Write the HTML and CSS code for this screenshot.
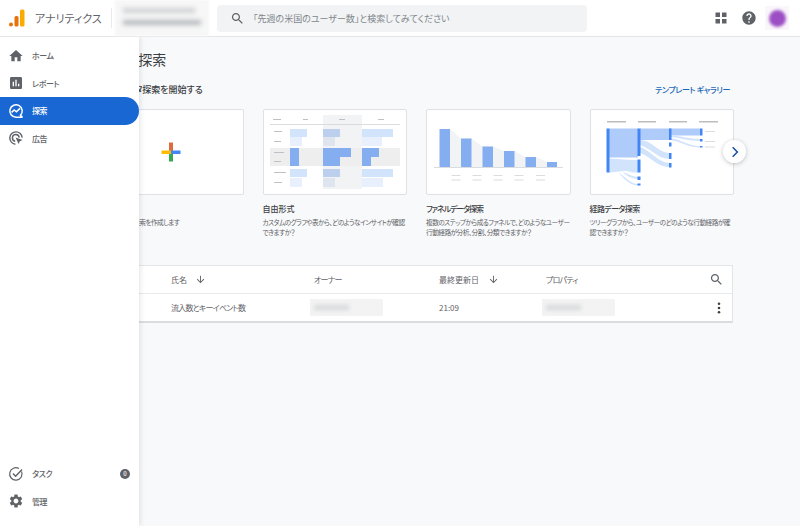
FILE: index.html
```html
<!DOCTYPE html>
<html lang="ja">
  <head>
    <meta charset="utf-8">
    <title>アナリティクス</title>
    <link rel="stylesheet" href="styles.css">
  </head>
  <body>
    <header class="topbar">
      <div class="brand">
        <svg class="logo" viewBox="0 0 16 18" width="16" height="18">
          <circle cx="2" cy="15.5" r="2" fill="#e8710a"/>
          <rect x="5.5" y="7" width="4" height="10.5" rx="1.5" fill="#e8710a"/>
          <rect x="11" y="0.5" width="4.5" height="17" rx="1.5" fill="#f9ab00"/>
        </svg>
        <span class="brand-name">アナリティクス</span>
      </div>
      <div class="divider"></div>
      <div class="account">
        <div class="account-line short"></div>
        <div class="account-line"></div>
      </div>
      <div class="search">
        <svg class="icon" viewBox="0 0 24 24" width="15" height="15"><path d="M15.5 14h-.79l-.28-.27C15.41 12.59 16 11.11 16 9.5 16 5.91 13.09 3 9.5 3S3 5.91 3 9.5 5.91 16 9.5 16c1.61 0 3.09-.59 4.23-1.57l.27.28v.79l5 4.99L20.49 19l-4.99-5zm-6 0C7.01 14 5 11.99 5 9.5S7.01 5 9.5 5 14 7.01 14 9.5 11.99 14 9.5 14z"/></svg>
        <span>「先週の米国のユーザー数」と検索してみてください</span>
      </div>
      <div class="top-actions">
        <svg class="icon" viewBox="0 0 14 14" width="14" height="14">
          <rect x="1.5" y="1.5" width="4.5" height="4.5"/><rect x="8" y="1.5" width="4.5" height="4.5"/>
          <rect x="1.5" y="8" width="4.5" height="4.5"/><rect x="8" y="8" width="4.5" height="4.5"/>
        </svg>
        <svg class="icon" viewBox="0 0 24 24" width="16" height="16"><path d="M12 2C6.48 2 2 6.48 2 12s4.48 10 10 10 10-4.48 10-10S17.52 2 12 2zm1 17h-2v-2h2v2zm2.07-7.75l-.9.92C13.45 12.9 13 13.5 13 15h-2v-.5c0-1.1.45-2.1 1.17-2.83l1.24-1.26c.37-.36.59-.86.59-1.41 0-1.1-.9-2-2-2s-2 .9-2 2H8c0-2.21 1.79-4 4-4s4 1.79 4 4c0 .88-.36 1.68-.93 2.25z"/></svg>
        <div class="avatar-box"><div class="avatar"></div></div>
      </div>
    </header>

    <div class="page">
      <nav class="sidebar">
        <ul class="nav-list">
          <li class="nav-item">
            <svg class="icon" viewBox="0 0 24 24" width="16" height="16"><path d="M10 20v-6h4v6h5v-8h3L12 3 2 12h3v8z"/></svg>
            <span>ホーム</span>
          </li>
          <li class="nav-item">
            <svg class="icon" viewBox="0 0 24 24" width="16" height="16"><path d="M19 3H5c-1.1 0-2 .9-2 2v14c0 1.1.9 2 2 2h14c1.1 0 2-.9 2-2V5c0-1.1-.9-2-2-2zM9 17H7v-7h2v7zm4 0h-2V7h2v10zm4 0h-2v-4h2v4z"/></svg>
            <span>レポート</span>
          </li>
          <li class="nav-item active">
            <svg viewBox="0 0 16 16" width="16" height="16" fill="none" stroke="#fff" stroke-width="1.5">
              <path d="M14 13.6l-1.6-1.2A6.2 6.2 0 1 0 8 14.2h6z" stroke-linejoin="round"/>
              <path d="M3.6 9.4L6.2 7l2.2 1.8 3.6-3.4" stroke-width="1.6"/>
            </svg>
            <span>探索</span>
          </li>
          <li class="nav-item">
            <svg viewBox="0 0 16 16" width="16" height="16" fill="none" stroke="#5f6368" stroke-width="1.4">
              <path d="M7.4 14.2a6.2 6.2 0 1 1 6.8-6.6"/>
              <path d="M7.2 11.2a3.4 3.4 0 1 1 4-3.6"/>
              <path d="M7.6 7.4l7 2.6-2.8 1.2-1.2 2.8z" fill="#5f6368" stroke="none"/>
            </svg>
            <span>広告</span>
          </li>
        </ul>
        <ul class="nav-list">
          <li class="nav-item">
            <svg viewBox="0 0 16 16" width="16" height="16" fill="none" stroke="#5f6368" stroke-width="1.2">
              <path d="M13.6 5.6A6.2 6.2 0 1 1 11 2.6"/>
              <path d="M5 7.6l2.6 2.6 6.4-6.6" stroke-width="1.4"/>
            </svg>
            <span>タスク</span>
            <span class="badge">0</span>
          </li>
          <li class="nav-item">
            <svg class="icon" viewBox="0 0 24 24" width="16" height="16"><path d="M19.14 12.94c.04-.3.06-.61.06-.94 0-.32-.02-.64-.07-.94l2.03-1.58c.18-.14.23-.41.12-.61l-1.92-3.32c-.12-.22-.37-.29-.59-.22l-2.39.96c-.5-.38-1.03-.7-1.62-.94l-.36-2.54c-.04-.24-.24-.41-.48-.41h-3.84c-.24 0-.43.17-.47.41l-.36 2.54c-.59.24-1.13.57-1.62.94l-2.39-.96c-.22-.08-.47 0-.59.22L2.74 8.87c-.12.21-.08.47.12.61l2.03 1.58c-.05.3-.09.63-.09.94s.02.64.07.94l-2.03 1.58c-.18.14-.23.41-.12.61l1.92 3.32c.12.22.37.29.59.22l2.39-.96c.5.38 1.03.7 1.62.94l.36 2.54c.05.24.24.41.48.41h3.84c.24 0 .44-.17.47-.41l.36-2.54c.59-.24 1.13-.56 1.62-.94l2.39.96c.22.08.47 0 .59-.22l1.92-3.32c.12-.22.07-.47-.12-.61l-2.01-1.58zM12 15.6c-1.98 0-3.6-1.62-3.6-3.6s1.62-3.6 3.6-3.6 3.6 1.62 3.6 3.6-1.62 3.6-3.6 3.6z"/></svg>
            <span>管理</span>
          </li>
        </ul>
      </nav>

      <main class="content">
        <h1 class="page-title">データ探索</h1>
        <div class="section-head">
          <h2>新規データ探索を開始する</h2>
          <a class="gallery-link">テンプレート ギャラリー</a>
        </div>

        <div class="cards">
          <div class="card">
            <div class="thumb thumb-plus">
              <svg viewBox="0 0 20 20" width="20" height="20">
                <rect x="8" y="0.5" width="4" height="9.5" fill="#dd6b3d"/>
                <rect x="8" y="10" width="4" height="9.5" fill="#34a853"/>
                <rect x="0.5" y="8.5" width="9.5" height="3.5" fill="#fbbc04"/>
                <rect x="10" y="8.5" width="9.5" height="3.5" fill="#4285f4"/>
              </svg>
            </div>
            <h3>空白</h3>
            <p>新しいデータ探索を作成します</p>
          </div>

          <div class="card">
            <div class="thumb">
              <svg viewBox="0 0 144 85" width="144" height="85">
                <rect x="60" y="6" width="39" height="74" fill="#f1f3f4"/>
                <rect x="7" y="39" width="130" height="18" fill="#eeeeee"/>
                <rect x="7" y="15" width="130" height="1" fill="#dadce0"/>
                <g fill="#bdc1c6">
                  <rect x="10" y="10" width="8" height="1"/><rect x="40" y="10" width="5" height="1"/>
                  <rect x="76" y="10" width="6" height="1"/><rect x="115" y="10" width="6" height="1"/>
                  <rect x="11" y="22" width="8" height="1"/><rect x="11" y="32" width="7" height="1"/>
                  <rect x="11" y="43" width="10" height="1"/><rect x="11" y="52" width="7" height="1"/>
                  <rect x="11" y="63" width="12" height="1"/><rect x="11" y="73" width="8" height="1"/>
                </g>
                <g fill="#d2e3fc">
                  <rect x="27" y="20" width="17" height="8"/><rect x="27" y="60" width="17" height="8"/>
                  <rect x="99" y="20" width="31" height="8"/><rect x="99" y="60" width="31" height="8"/>
                </g>
                <g fill="#e8f0fe">
                  <rect x="27" y="28" width="12" height="9"/><rect x="27" y="69" width="12" height="9"/>
                  <rect x="99" y="28" width="20" height="9"/><rect x="99" y="69" width="21" height="9"/>
                </g>
                <g fill="#bcd0ee">
                  <rect x="60" y="20" width="17" height="8"/><rect x="60" y="60" width="17" height="8"/>
                </g>
                <g fill="#dfe5ee">
                  <rect x="60" y="28" width="12" height="9"/><rect x="60" y="69" width="12" height="9"/>
                </g>
                <g fill="#85aef0">
                  <rect x="27" y="39" width="9" height="18"/>
                  <rect x="60" y="39" width="28" height="9"/><rect x="60" y="48" width="17" height="9"/>
                  <rect x="99" y="39" width="17" height="9"/><rect x="99" y="48" width="9" height="9"/>
                </g>
              </svg>
            </div>
            <h3>自由形式</h3>
            <p>カスタムのグラフや表から、どのようなインサイトが確認<br>できますか？</p>
          </div>

          <div class="card">
            <div class="thumb">
              <svg viewBox="0 0 144 85" width="144" height="85">
                <path d="M24 20L35 29.5H45.5L56.5 37.5H67L78 42H88.5L99.5 48H110L121 53H131V58H24z" fill="#f1f3f4"/>
                <rect x="8" y="58" width="129" height="1" fill="#dadce0"/>
                <g fill="#85aef0">
                  <rect x="13.5" y="20" width="10.5" height="38"/>
                  <rect x="35" y="29.5" width="10.5" height="28.5"/>
                  <rect x="56.5" y="37.5" width="10.5" height="20.5"/>
                  <rect x="78" y="42" width="10.5" height="16"/>
                  <rect x="99.5" y="48" width="10.5" height="10"/>
                  <rect x="121" y="53" width="10" height="5"/>
                </g>
                <g fill="#dadce0">
                  <rect x="25.5" y="66" width="9" height="1"/><rect x="25.5" y="70.5" width="9" height="1"/>
                  <rect x="46.5" y="66" width="9" height="1"/><rect x="46.5" y="70.5" width="9" height="1"/>
                  <rect x="67.5" y="66" width="9" height="1"/><rect x="67.5" y="70.5" width="9" height="1"/>
                  <rect x="88.5" y="66" width="9" height="1"/><rect x="88.5" y="70.5" width="9" height="1"/>
                  <rect x="110" y="66" width="9" height="1"/><rect x="110" y="70.5" width="9" height="1"/>
                </g>
              </svg>
            </div>
            <h3 class="title-funnel">ファネルデータ探索</h3>
            <p>複数のステップから成るファネルで、どのようなユーザー<br>行動経路が分析、分割、分類できますか？</p>
          </div>

          <div class="card">
            <div class="thumb">
              <svg viewBox="0 0 144 85" width="144" height="85">
                <g fill="#bdbdbd">
                  <rect x="17" y="12" width="19" height="1.5"/><rect x="48" y="12" width="18" height="1.5"/>
                  <rect x="79" y="12" width="18" height="1.5"/><rect x="109" y="12" width="19" height="1.5"/>
                </g>
                <rect x="19" y="19.5" width="29" height="29" fill="#aecbfa"/>
                <path d="M19 49.5C32 50 36 51 48 51V63.5H42C34 60 28 63.5 19 63.5z" fill="#d2e3fc"/>
                <path d="M33 63.5C38 64 42 68 48 68V70C41 70 36 66 33 63.5zM28 63.5C36 68 40 75 48 75V76.5C38 76 33 68 28 63.5z" fill="#d2e3fc"/>
                <rect x="50" y="19.5" width="30" height="11.5" fill="#aecbfa"/>
                <path d="M50 31C62 31 68 44 80 44V50C68 50 62 40 50 36zM50 38C62 42 68 54 80 54V58C66 58 62 48 50 44z" fill="#d2e3fc"/>
                <rect x="80" y="19.5" width="30" height="7" fill="#aecbfa"/>
                <path d="M81 26.5C92 27 98 30 110 30V32C98 32 92 29 81 28zM81 29C92 31 98 37 110 37V38.5C98 38.5 92 33 81 31z" fill="#d2e3fc"/>
                <g fill="#4285f4">
                  <rect x="16.5" y="19.5" width="3" height="44"/>
                  <rect x="47.5" y="19.5" width="3" height="27.5"/><rect x="47.5" y="50.5" width="3" height="13"/>
                  <rect x="47.5" y="67.5" width="3" height="3.5"/><rect x="47.5" y="74.5" width="3" height="2"/>
                  <rect x="79" y="19.5" width="2.5" height="11.5"/><rect x="79" y="33.5" width="2.5" height="4"/>
                  <rect x="79" y="44" width="2.5" height="6"/><rect x="79" y="54" width="2.5" height="4.5"/>
                  <rect x="110" y="19.5" width="2.5" height="7"/><rect x="110" y="30" width="2.5" height="2.5"/>
                  <rect x="110" y="37" width="2.5" height="1.5"/>
                </g>
                <g fill="#dadce0">
                  <rect x="115" y="22" width="10" height="1"/><rect x="115" y="32" width="10" height="1"/>
                  <rect x="115" y="37.5" width="10" height="1"/>
                </g>
              </svg>
            </div>
            <h3 class="title-path">経路データ探索</h3>
            <p>ツリーグラフから、ユーザーのどのような行動経路が確<br>認できますか？</p>
          </div>
        </div>

        <button class="next-btn">
          <svg viewBox="0 0 24 24" width="14" height="14"><path d="M8 4l8 8-8 8" fill="none" stroke="#174ea6" stroke-width="2.6"/></svg>
        </button>

        <div class="table">
          <div class="table-row table-head">
            <div class="col-name">氏名
              <svg class="icon" viewBox="0 0 24 24" width="11" height="11"><path d="M20 12l-1.41-1.41L13 16.17V4h-2v12.17l-5.58-5.59L4 12l8 8 8-8z"/></svg>
            </div>
            <div class="col-owner kana">オーナー</div>
            <div class="col-date">最終更新日
              <svg class="icon" viewBox="0 0 24 24" width="11" height="11"><path d="M20 12l-1.41-1.41L13 16.17V4h-2v12.17l-5.58-5.59L4 12l8 8 8-8z"/></svg>
            </div>
            <div class="col-prop kana">プロパティ</div>
            <div class="col-end">
              <svg class="icon table-search" viewBox="0 0 24 24" width="15" height="15"><path d="M15.5 14h-.79l-.28-.27C15.41 12.59 16 11.11 16 9.5 16 5.91 13.09 3 9.5 3S3 5.91 3 9.5 5.91 16 9.5 16c1.61 0 3.09-.59 4.23-1.57l.27.28v.79l5 4.99L20.49 19l-4.99-5zm-6 0C7.01 14 5 11.99 5 9.5S7.01 5 9.5 5 14 7.01 14 9.5 11.99 14 9.5 14z"/></svg>
            </div>
          </div>
          <div class="table-row">
            <div class="col-name kana">流入数とキーイベント数</div>
            <div class="col-owner"><div class="redacted"><i></i></div></div>
            <div class="col-date">21:09</div>
            <div class="col-prop"><div class="redacted"><i></i></div></div>
            <div class="col-end">
              <svg class="kebab" viewBox="0 0 4 14" width="4" height="12" fill="#3c4043"><circle cx="2" cy="2" r="1.5"/><circle cx="2" cy="7" r="1.5"/><circle cx="2" cy="12" r="1.5"/></svg>
            </div>
          </div>
        </div>
      </main>
    </div>
  </body>
</html>
```

FILE: styles.css
```css
* {
  box-sizing: border-box;
}
html,
body {
  height: 100%;
}
body {
  margin: 0;
  overflow: hidden;
  display: flex;
  flex-direction: column;
  font-family: "Noto Sans CJK JP", "Noto Sans", sans-serif;
  font-feature-settings: "palt";
  color: #3c4043;
  background: #f8f9fa;
}
.icon {
  fill: #5f6368;
  flex: none;
}

/* top bar */
.topbar {
  height: 37px;
  flex: none;
  display: flex;
  align-items: center;
  background: white;
  border-bottom: 1px solid #e4e5e7;
}
.brand {
  width: 111px;
  display: flex;
  align-items: center;
  padding-left: 9px;
  gap: 10px;
}
.brand-name {
  font-size: 11px;
  color: #5f6368;
}
.divider {
  width: 1px;
  height: 20px;
  background: #e8eaed;
}
.account {
  width: 94px;
  height: 36px;
  margin-left: 3px;
  padding: 8px 8px 0;
  background: #f7f7f7;
  filter: blur(1px);
}
.account-line {
  height: 5px;
  width: 78px;
  margin-bottom: 7px;
  background: #b4b8bc;
  filter: blur(2px);
}
.account-line.short {
  width: 72px;
  background: #cdd0d3;
}
.search {
  width: 370px;
  height: 27px;
  margin-left: 8px;
  padding-left: 13px;
  display: flex;
  align-items: center;
  gap: 8px;
  border-radius: 4px;
  background: #f1f3f4;
  font-size: 9px;
  color: #80868b;
}
.top-actions {
  margin-left: auto;
  padding-right: 11px;
  display: flex;
  align-items: center;
  gap: 13px;
}
.avatar-box {
  width: 24px;
  height: 24px;
  margin-left: -5px;
  display: flex;
  align-items: center;
  justify-content: center;
  background: #faf7fb;
}
.avatar {
  width: 17px;
  height: 17px;
  border-radius: 50%;
  background: #9c4fc4;
  filter: blur(1.5px);
}

/* sidebar lies over the scrolled content */
.page {
  position: relative;
  flex: 1;
  min-height: 0;
  overflow: hidden;
}
.sidebar {
  position: absolute;
  top: 0;
  bottom: 0;
  left: 0;
  z-index: 2;
  width: 139px;
  padding: 5px 0 11px;
  display: flex;
  flex-direction: column;
  justify-content: space-between;
  background: white;
  box-shadow: 1px 0 5px rgba(60, 64, 67, 0.15);
}
.nav-list {
  list-style: none;
  margin: 0;
  padding: 0;
}
.nav-item {
  height: 27.5px;
  padding: 0 9px 0 8px;
  display: flex;
  align-items: center;
  gap: 8px;
  font-size: 8px;
  font-weight: 500;
  letter-spacing: -0.4px;
  color: #5f6368;
  border-radius: 0 14px 14px 0;
}
.nav-item svg {
  flex: none;
}
.nav-item.active {
  background: #1967d2;
  color: white;
}
.badge {
  width: 10px;
  height: 10px;
  margin-left: auto;
  border-radius: 50%;
  background: #5f6368;
  color: white;
  font-size: 6px;
  letter-spacing: 0;
  line-height: 10px;
  text-align: center;
}

/* main */
.content {
  position: relative;
  height: 100%;
  padding: 12px 67px 0 99px;
}
.page-title {
  margin: 0;
  font-size: 14px;
  font-weight: 400;
  line-height: 20px;
  color: #3c4043;
}
.section-head {
  margin-top: 10px;
  display: flex;
  justify-content: space-between;
  align-items: center;
  height: 20px;
}
.section-head h2 {
  margin: 0;
  font-size: 9px;
  font-weight: 500;
  color: #3c4043;
}
.gallery-link {
  margin-right: 3px;
  font-size: 8px;
  font-weight: 500;
  letter-spacing: -0.4px;
  color: #1a67b8;
}
.cards {
  margin-top: 10px;
  display: grid;
  grid-template-columns: repeat(4, 144.5px);
  column-gap: 19px;
}
.thumb {
  height: 86px;
  background: white;
  border: 1px solid #dfe1e5;
  border-radius: 2px;
  overflow: hidden;
}
.thumb svg {
  display: block;
  margin: -1px;
}
.thumb-plus {
  display: flex;
  align-items: center;
  justify-content: center;
}
.thumb-plus svg {
  margin: 0;
}
.card h3 {
  margin: 6px 0 0;
  font-size: 8px;
  font-weight: 500;
  line-height: 16px;
  color: #3c4043;
}
.card .title-funnel {
  letter-spacing: -1.1px;
}
.card .title-path {
  letter-spacing: -0.6px;
}
.card p {
  margin: 0;
  font-size: 6.7px;
  letter-spacing: -0.55px;
  line-height: 10px;
  white-space: nowrap;
  color: #5f6368;
}
.next-btn {
  position: absolute;
  top: 103px;
  left: 723px;
  width: 23px;
  height: 23px;
  padding: 0;
  display: flex;
  align-items: center;
  justify-content: center;
  border: none;
  border-radius: 50%;
  background: white;
  box-shadow: 0 1px 4px rgba(60, 64, 67, 0.3);
}

/* table */
.table {
  margin-top: 28px;
  background: white;
  border: 1px solid #e4e5e7;
  border-bottom: 2px solid #dadce0;
  font-size: 8px;
  color: #5f6368;
}
.table-row {
  height: 27px;
  padding-left: 71px;
  display: grid;
  grid-template-columns: 139px 129px 103px 1fr 30px;
  align-items: center;
}
.table-head {
  height: 28px;
  border-bottom: 1px solid #e8eaed;
}
.table-head .col-owner,
.table-head .col-prop {
  padding-left: 4px;
}
.kana {
  letter-spacing: -0.8px;
}
.col-name,
.col-date {
  display: flex;
  align-items: center;
  gap: 8px;
}
.col-date {
  gap: 9px;
}
.col-end {
  display: flex;
  justify-content: center;
}
.table-search {
  margin-right: 2px;
}
.kebab {
  margin-left: 4px;
}
.redacted {
  width: 73px;
  height: 17px;
  display: flex;
  align-items: center;
  padding-left: 4px;
  background: #f3f3f3;
  filter: blur(0.5px);
}
.redacted i {
  display: block;
  width: 50%;
  height: 5px;
  background: #d6d8da;
  filter: blur(2px);
}
```
